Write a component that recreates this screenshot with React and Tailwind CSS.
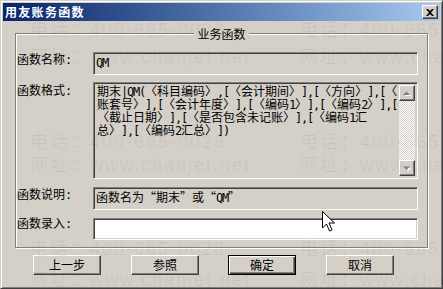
function G({ t }) {
  const parts = [];
  let buf = "";
  let type = null;
  const flush = () => {
    if (buf) parts.push({ ty: type, s: buf });
    buf = "";
  };
  for (const c of Array.from(t)) {
    const code = c.charCodeAt(0);
    let ty = code < 0x2000 ? "a" : "c";
    if (c === "〈" || c === "“") ty = "l";
    if (c === "〉" || c === "”") ty = "r";
    if (ty === "l" || ty === "r") {
      flush();
      type = null;
      parts.push({ ty, s: c });
      continue;
    }
    if (ty !== type) flush();
    type = ty;
    buf += c;
  }
  flush();
  return (
    <>
      {parts.map((p, i) => {
        if (p.ty === "a")
          return (
            <span key={i} className="font-['DejaVu_Sans_Mono',monospace] tracking-[-1.22px]">
              {p.s}
            </span>
          );
        if (p.ty === "l")
          return (
            <span key={i} className="inline-block w-[12px] text-right">
              {p.s}
            </span>
          );
        if (p.ty === "r")
          return (
            <span key={i} className="inline-block w-[12px] text-left">
              {p.s}
            </span>
          );
        return <span key={i}>{p.s}</span>;
      })}
    </>
  );
}

export default function App() {
  const sunken =
    "border border-t-[#808080] border-l-[#808080] border-b-white border-r-white shadow-[inset_1px_1px_0_#404040,inset_-1px_-1px_0_#d4d0c8]";
  const raised =
    "border border-t-white border-l-white border-b-[#404040] border-r-[#404040] shadow-[inset_-1px_-1px_0_#808080]";
  const wm = "absolute whitespace-nowrap text-[18px] leading-[18px] tracking-[2px] text-black/[0.06] font-['Liberation_Sans','Noto_Sans_CJK_SC',sans-serif]";
  const cjk = "font-['Noto_Sans_CJK_SC',sans-serif]";
  return (
    <div className={`relative w-[443px] h-[289px] bg-[#d4d0c8] overflow-hidden ${cjk} text-[12px] text-black`}>
      <div className="flex flex-col w-full h-full p-[2px] border border-t-[#d4d0c8] border-l-[#d4d0c8] border-r-[#404040] border-b-[#404040] shadow-[inset_1px_1px_0_#fff,inset_-1px_-1px_0_#808080]">
        {/* title bar */}
        <div className="flex items-center justify-between h-[18px] pl-[2px] pr-[2px] bg-gradient-to-r from-[#0a246a] to-[#a6caf0]">
          <span className="text-white font-bold text-[12px] leading-[14px] tracking-[1.3px]">用友账务函数</span>
          <div className={`flex items-center justify-center w-[16px] h-[14px] bg-[#d4d0c8] ${raised}`}>
            <svg width="8" height="7" viewBox="0 0 8 7">
              <path d="M0 0 L2 0 L4 2 L6 0 L8 0 L5 3.5 L8 7 L6 7 L4 5 L2 7 L0 7 L3 3.5 Z" fill="#000" />
            </svg>
          </div>
        </div>

        {/* group box */}
        <div className="relative mt-[12px] ml-[12px] w-[413px] h-[215px] border border-[#808080] shadow-[inset_1px_1px_0_#fff,1px_1px_0_#fff]">
          <div className="absolute left-0 right-0 -top-[7px] flex justify-center">
            <span className="bg-[#d4d0c8] px-[3px] leading-[14px]">业务函数</span>
          </div>
          <div className="flex flex-col pt-[18px] pl-[1px]">
            <div className="flex items-start">
              <div className="w-[76px] leading-[14px] whitespace-nowrap"><G t="函数名称:" /></div>
              <div className={`w-[325px] h-[23px] px-[2px] pt-[2px] leading-[14px] bg-[#d4d0c8] whitespace-nowrap ${sunken}`}><G t="QM" /></div>
            </div>
            <div className="flex items-start mt-[7px]">
              <div className="w-[76px] leading-[14px] pt-[1px] whitespace-nowrap"><G t="函数格式:" /></div>
              <div className={`flex w-[325px] h-[97px] p-[2px] bg-[#d4d0c8] ${sunken}`}>
                <div className="flex-1 pl-[1px] leading-[12px] whitespace-nowrap overflow-hidden">
                  <div><G t="期末|QM(〈科目编码〉,[〈会计期间〉],[〈方向〉],[〈" /></div>
                  <div><G t="账套号〉],[〈会计年度〉],[〈编码1〉],[〈编码2〉],[" /></div>
                  <div><G t="〈截止日期〉],[〈是否包含未记账〉],[〈编码1汇" /></div>
                  <div><G t="总〉],[〈编码2汇总〉])" /></div>
                </div>
                <div className="flex flex-col w-[16px] h-full">
                  <div className={`flex items-center justify-center w-[16px] h-[16px] bg-[#d4d0c8] ${raised}`}>
                    <svg width="8" height="5" viewBox="0 0 8 5">
                      <path d="M1 4 L4 1 L7 4 Z" fill="#fff" transform="translate(1,1)" />
                      <path d="M0 4 L3.5 0.5 L7 4 Z" fill="#808080" />
                    </svg>
                  </div>
                  <div className="flex-1 bg-[repeating-conic-gradient(#fff_0%_25%,#d4d0c8_0%_50%)] bg-[length:2px_2px]" />
                  <div className={`flex items-center justify-center w-[16px] h-[16px] bg-[#d4d0c8] ${raised}`}>
                    <svg width="8" height="5" viewBox="0 0 8 5">
                      <path d="M1 1 L4 4 L7 1 Z" fill="#fff" transform="translate(1,1)" />
                      <path d="M0 0.5 L3.5 4 L7 0.5 Z" fill="#808080" />
                    </svg>
                  </div>
                </div>
              </div>
            </div>
            <div className="flex items-start mt-[8px]">
              <div className="w-[76px] leading-[14px] whitespace-nowrap"><G t="函数说明:" /></div>
              <div className={`w-[325px] h-[23px] px-[2px] pt-[2px] leading-[14px] bg-[#d4d0c8] whitespace-nowrap ${sunken}`}><G t="函数名为“期末”或“QM”" /></div>
            </div>
            <div className="flex items-start mt-[8px]">
              <div className="w-[76px] leading-[14px] -mt-[2px] whitespace-nowrap"><G t="函数录入:" /></div>
              <div className={`w-[325px] h-[22px] bg-white ${sunken}`} />
            </div>
          </div>
        </div>

        {/* buttons */}
        <div className="flex mt-[7px] pl-[30px]">
          <div className={`flex items-center justify-center w-[68px] h-[20px] ${raised}`}>上一步</div>
          <div className={`flex items-center justify-center w-[68px] h-[20px] ml-[30px] ${raised}`}>参照</div>
          <div className="flex items-center justify-center w-[68px] h-[20px] ml-[29px] border border-black shadow-[inset_1px_1px_0_#fff,inset_-1px_-1px_0_#404040,inset_-2px_-2px_0_#808080]">确定</div>
          <div className={`flex items-center justify-center w-[68px] h-[20px] ml-[30px] ${raised}`}>取消</div>
        </div>
      </div>

      {/* watermark */}
      <div className="pointer-events-none">
        <span className={`${wm} left-[30px] top-[21px]`}>电话：400-665-0028</span>
        <span className={`${wm} left-[300px] top-[21px]`}>电话：400-665-0028</span>
        <span className={`${wm} left-[30px] top-[48px]`}>网址：www.chanjet.net</span>
        <span className={`${wm} left-[300px] top-[48px]`}>网址：www.chanjet.net</span>
        <span className={`${wm} left-[30px] top-[133px]`}>电话：400-665-0028</span>
        <span className={`${wm} left-[300px] top-[133px]`}>电话：400-665-0028</span>
        <span className={`${wm} left-[30px] top-[156px]`}>网址：www.chanjet.net</span>
        <span className={`${wm} left-[300px] top-[156px]`}>网址：www.chanjet.net</span>
        <span className={`${wm} left-[30px] top-[240px]`}>电话：400-665-0028</span>
        <span className={`${wm} left-[300px] top-[240px]`}>电话：400-665-0028</span>
        <span className={`${wm} left-[30px] top-[271px]`}>网址：www.chanjet.net</span>
        <span className={`${wm} left-[300px] top-[271px]`}>网址：www.chanjet.net</span>
      </div>

      {/* mouse cursor */}
      <svg className="absolute left-[322px] top-[211px]" width="13" height="21" viewBox="0 0 13 21">
        <path d="M0.5 0.5 L0.5 17 L4.5 13 L7.5 20 L10 19 L7 12 L12.5 12 Z" fill="#fff" stroke="#000" strokeWidth="1" />
      </svg>
    </div>
  );
}
